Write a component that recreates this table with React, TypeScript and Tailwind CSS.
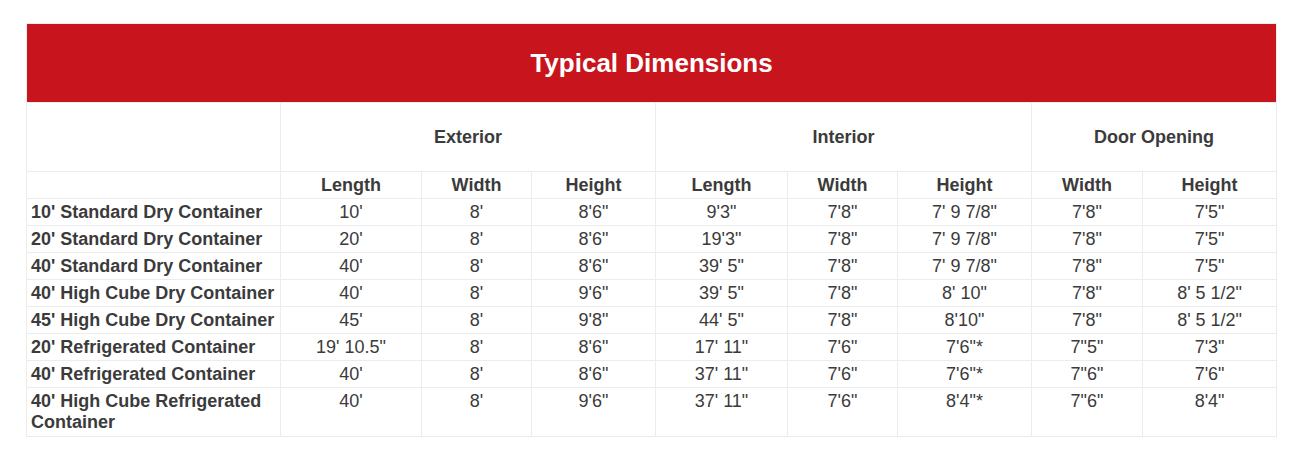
const rows: string[][] = [
  ["10' Standard Dry Container", "10'", "8'", '8\'6"', '9\'3"', '7\'8"', '7\' 9 7/8"', '7\'8"', '7\'5"'],
  ["20' Standard Dry Container", "20'", "8'", '8\'6"', '19\'3"', '7\'8"', '7\' 9 7/8"', '7\'8"', '7\'5"'],
  ["40' Standard Dry Container", "40'", "8'", '8\'6"', '39\' 5"', '7\'8"', '7\' 9 7/8"', '7\'8"', '7\'5"'],
  ["40' High Cube Dry Container", "40'", "8'", '9\'6"', '39\' 5"', '7\'8"', '8\' 10"', '7\'8"', '8\' 5 1/2"'],
  ["45' High Cube Dry Container", "45'", "8'", '9\'8"', '44\' 5"', '7\'8"', '8\'10"', '7\'8"', '8\' 5 1/2"'],
  ["20' Refrigerated Container", '19\' 10.5"', "8'", '8\'6"', '17\' 11"', '7\'6"', '7\'6"*', '7"5"', '7\'3"'],
  ["40' Refrigerated Container", "40'", "8'", '8\'6"', '37\' 11"', '7\'6"', '7\'6"*', '7"6"', '7\'6"'],
  ["40' High Cube Refrigerated Container", "40'", "8'", '9\'6"', '37\' 11"', '7\'6"', '8\'4"*', '7"6"', '8\'4"'],
]

const subHeads = ['Length', 'Width', 'Height', 'Length', 'Width', 'Height', 'Width', 'Height']
const widths = ['w-[254px]', 'w-[141px]', 'w-[110px]', 'w-[124px]', 'w-[132px]', 'w-[110px]', 'w-[134px]', 'w-[111px]', 'w-[134px]']

export default function App() {
  return (
    <div className="min-h-[469px] bg-white pt-[23px] pl-[26px] font-['Liberation_Sans',Arial,sans-serif] text-[#3b3b3b]">
      <table className="w-[1250px] table-fixed border-collapse border border-[#ececec] text-[18px] leading-[21px]">
        <colgroup>
          {widths.map((w, i) => (
            <col key={i} className={w} />
          ))}
        </colgroup>
        <thead>
          <tr>
            <th colSpan={9} className="h-[79px] bg-[#c8151d] p-0 text-center align-middle text-[26px] font-bold leading-[30px] text-white">
              Typical Dimensions
            </th>
          </tr>
          <tr>
            <th className="h-[69px] border border-[#ececec]"></th>
            <th colSpan={3} className="h-[69px] border border-[#ececec] text-center align-middle font-bold">
              Exterior
            </th>
            <th colSpan={3} className="h-[69px] border border-[#ececec] text-center align-middle font-bold">
              Interior
            </th>
            <th colSpan={2} className="h-[69px] border border-[#ececec] text-center align-middle font-bold">
              Door Opening
            </th>
          </tr>
          <tr>
            <th className="h-[27px] border border-[#ececec]"></th>
            {subHeads.map((h, i) => (
              <th key={i} className="h-[27px] border border-[#ececec] px-1 pt-[3px] pb-[2px] text-center align-top font-bold">
                {h}
              </th>
            ))}
          </tr>
        </thead>
        <tbody>
          {rows.map((r, i) => {
            const last = i === rows.length - 1
            return (
              <tr key={i}>
                {r.map((c, j) => (
                  <td
                    key={j}
                    className={
                      (j === 0
                        ? 'border border-[#ececec] pl-[4px] pr-1 pt-[3px] text-left align-top font-bold'
                        : 'border border-[#ececec] px-1 pt-[3px] text-center align-top') +
                      (last ? ' pb-[3px]' : ' pb-[2px]')
                    }
                  >
                    {c}
                  </td>
                ))}
              </tr>
            )
          })}
        </tbody>
      </table>
    </div>
  )
}
